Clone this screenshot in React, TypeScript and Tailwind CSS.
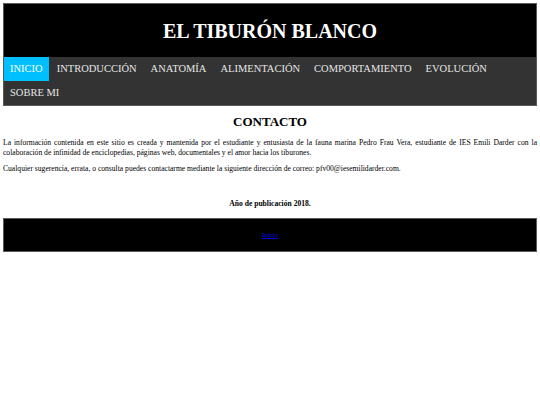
export default function App() {
  const items = ["INICIO", "INTRODUCCIÓN", "ANATOMÍA", "ALIMENTACIÓN", "COMPORTAMIENTO", "EVOLUCIÓN", "SOBRE MI"];

  return (
    <div className="p-[3px] font-['Liberation_Serif',serif] text-black bg-white min-h-screen">
      <header className="border border-[#5a5a5a]">
        <div className="bg-black h-[53px] flex items-center justify-center">
          <h1 className="text-white font-bold text-[20px] leading-none">EL TIBURÓN BLANCO</h1>
        </div>
        <nav className="bg-[#333333] flex flex-wrap gap-x-[2px]">
          {items.map((item, i) => (
            <a
              key={item}
              href="#"
              className={
                i === 0
                  ? "bg-[#00bfff] text-white px-[6px] h-[24px] flex items-center text-[10.5px]"
                  : "text-[#e6e6e6] px-[6px] h-[24px] flex items-center text-[10.5px]"
              }
            >
              {item}
            </a>
          ))}
        </nav>
      </header>

      <main>
        <h2 className="text-center font-bold text-[13px] leading-[15px] mt-[8px]">CONTACTO</h2>
        <p className="text-justify text-[7.6px] leading-[10px] mt-[9px]">
          La información contenida en este sitio es creada y mantenida por el estudiante y entusiasta de la fauna marina Pedro Frau Vera, estudiante de IES Emili Darder con la colaboración de infinidad de enciclopedias, páginas web, documentales y el amor hacia los tiburones.
        </p>
        <p className="text-justify text-[7.6px] leading-[10px] mt-[6px]">
          Cualquier sugerencia, errata, o consulta puedes contactarme mediante la siguiente dirección de correo: pfv00@iesemilidarder.com.
        </p>
        <p className="text-center font-bold text-[7.6px] leading-[10px] mt-[25px]">Año de publicación 2018.</p>
      </main>

      <footer className="mt-[9px] border border-[#5a5a5a] bg-black h-[34px] flex items-center justify-center">
        <a href="#" className="text-[#0000ee] underline text-[7px] leading-none">Inicio</a>
      </footer>
    </div>
  );
}
